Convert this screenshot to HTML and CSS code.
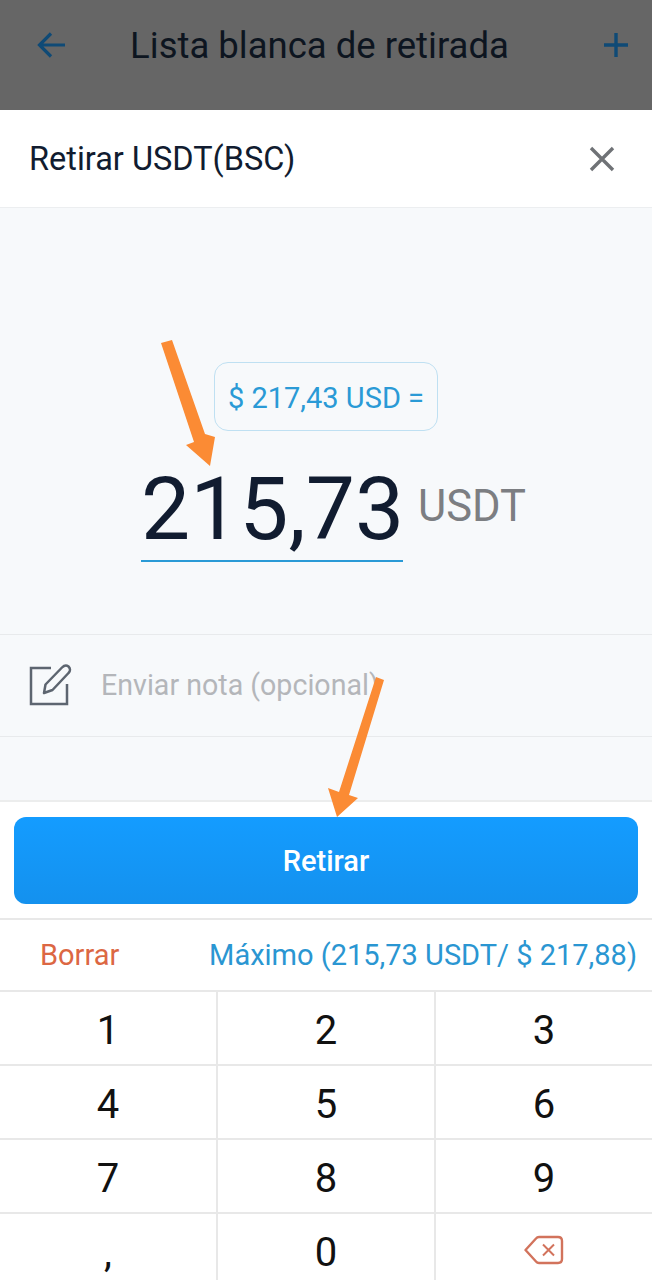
FILE: index.html
```html
<!DOCTYPE html>
<html lang="es">
<head>
    <meta charset="UTF-8">
    <meta name="viewport" content="width=device-width, initial-scale=1.0">
    <title>Retirar USDT</title>
    <link rel="stylesheet" href="styles.css">
</head>
<body>
    <div class="page">
        <header class="topbar">
            <svg class="topbar-icon" width="32" height="32" viewBox="0 0 32 32"><path d="M30 16H5M16 4.500L4.500 16 16 27.500" fill="none" stroke="#0f4a76" stroke-width="3.200"/></svg>
            <h1 class="topbar-title">Lista blanca de retirada</h1>
            <svg class="topbar-icon" width="28" height="28" viewBox="0 0 28 28"><path d="M14 2V26M2 14H26" fill="none" stroke="#0f4a76" stroke-width="3.400"/></svg>
        </header>
        <div class="sheet-head">
            <h2 class="sheet-title">Retirar USDT(BSC)</h2>
            <svg width="28" height="28" viewBox="0 0 28 28"><path d="M3 3L25 25M25 3L3 25" fill="none" stroke="#6f7276" stroke-width="3.400"/></svg>
        </div>
        <main class="sheet-body">
            <div class="rate">$ 217,43 USD =</div>
            <div class="amount-row">
                <span class="amount">215,73</span>
                <span class="unit">USDT</span>
            </div>
            <div class="note">
                <svg width="44" height="44" viewBox="0 -1 44 44"><path d="M22 4H2V40H38V20" fill="none" stroke="#5d6570" stroke-width="2.500"/><path d="M15 29L16.500 20.500 33 3.500C35 1.500 37.500 1 39.500 2.500 41.500 4.500 41.500 7 39.500 9L23.500 26Z" fill="none" stroke="#5d6570" stroke-width="2.500" stroke-linejoin="round"/></svg>
                <span class="note-text">Enviar nota (opcional)</span>
            </div>
        </main>
        <footer class="sheet-foot">
            <div class="submit-wrap">
                <button class="submit" type="button">Retirar</button>
            </div>
            <div class="actions">
                <span class="clear">Borrar</span>
                <span class="max">Máximo (215,73 USDT/ $ 217,88)</span>
            </div>
            <div class="keypad">
                <div class="key">1</div>
                <div class="key">2</div>
                <div class="key">3</div>
                <div class="key">4</div>
                <div class="key">5</div>
                <div class="key">6</div>
                <div class="key">7</div>
                <div class="key">8</div>
                <div class="key">9</div>
                <div class="key">,</div>
                <div class="key">0</div>
                <div class="key key-back">
                    <svg width="40" height="30" viewBox="0 0 40 30"><path d="M1.500 15L12 3.500C12.800 2.500 13.500 2 15 2H34C36.500 2 38 3.500 38 6V24C38 26.500 36.500 28 34 28H15C13.500 28 12.800 27.500 12 26.500Z" fill="none" stroke="#d2735c" stroke-width="2.400" stroke-linejoin="round"/><path d="M19 9.500L30 20.500M30 9.500L19 20.500" fill="none" stroke="#d2735c" stroke-width="2"/></svg>
                </div>
            </div>
        </footer>
        <!-- orange arrows drawn on top of the screenshot -->
        <svg class="arrows" width="652" height="1280" viewBox="0 0 652 1280">
            <path d="M161 343L172 340 205 434 215 437 210 466 186 445 194 442Z" fill="#fb8b34"/>
            <path d="M376 677L384 680 349 795 358 798 337 817 328 788 339 792Z" fill="#fb8b34"/>
        </svg>
    </div>
</body>
</html>
```
FILE: styles.css
```css
* {
    box-sizing: border-box;
}
body {
    margin: 0;
    font-family: Roboto, "Liberation Sans", sans-serif;
    color: #111c30;
}
.page {
    position: relative;
    width: 652px;
    height: 1280px;
    overflow: hidden;
    background: #fff;
    display: flex;
    flex-direction: column;
}
.topbar {
    height: 110px;
    flex: none;
    background: #666666;
    display: flex;
    align-items: center;
    justify-content: space-between;
    padding: 0 22px 20px 35px;
}
.topbar-title {
    margin: 0 30px 0 0;
    font-size: 36.500px;
    font-weight: 400;
    color: #0d1520;
}
.sheet-head {
    height: 98px;
    flex: none;
    display: flex;
    align-items: center;
    justify-content: space-between;
    padding: 0 36px 0 29px;
    border-bottom: 1px solid #eceef0;
}
.sheet-title {
    margin: 0;
    font-size: 32.500px;
    font-weight: 400;
    color: #111c30;
}
.sheet-body {
    height: 592px;
    flex: none;
    background: #f7f9fb;
    display: flex;
    flex-direction: column;
    align-items: center;
    padding-top: 154px;
}
.rate {
    width: 224px;
    height: 69px;
    padding-top: 2px;
    border: 1px solid #bfe0f2;
    border-radius: 14px;
    display: flex;
    align-items: center;
    justify-content: center;
    font-size: 29px;
    color: #2a9ad6;
}
.amount-row {
    width: 100%;
    height: 131px;
    display: flex;
    align-items: flex-start;
    padding-left: 141px;
}
.amount {
    width: 262px;
    height: 131px;
    border-bottom: 2px solid #2a9ad6;
    text-align: center;
    font-size: 87.500px;
    line-height: 156px;
    color: #111c30;
}
.unit {
    margin-left: 15px;
    font-size: 43.500px;
    line-height: 152px;
    color: #7c7e82;
}
.note {
    width: 100%;
    height: 103px;
    margin-top: 72px;
    padding-bottom: 1px;
    border-top: 1px solid #e8eaec;
    border-bottom: 1px solid #e8eaec;
    display: flex;
    align-items: center;
    gap: 28px;
    padding-left: 29px;
}
.note-text {
    font-size: 28.600px;
    color: #b4b6ba;
}
.sheet-foot {
    flex: 1;
    border-top: 2px solid #eceded;
    display: flex;
    flex-direction: column;
}
.submit-wrap {
    height: 118px;
    flex: none;
    padding: 15px 14px;
    border-bottom: 2px solid #e8e8e8;
}
.submit {
    display: block;
    width: 100%;
    height: 87px;
    border: none;
    border-radius: 12px;
    background: linear-gradient(#149cff, #1491ee);
    color: #fff;
    font-family: inherit;
    font-size: 29px;
    font-weight: 500;
}
.actions {
    height: 72px;
    flex: none;
    display: flex;
    align-items: center;
    justify-content: space-between;
    padding: 0 15px 0 40px;
    border-bottom: 2px solid #e8e8e8;
    font-size: 29px;
}
.clear {
    color: #dc6743;
}
.max {
    color: #2a96d2;
}
.keypad {
    flex: 1;
    display: grid;
    grid-template-columns: 218px 218px 216px;
    grid-auto-rows: 74px;
}
.key {
    display: flex;
    align-items: center;
    justify-content: center;
    padding-top: 4px;
    border-right: 2px solid #e8e8e8;
    border-bottom: 2px solid #e8e8e8;
    font-size: 40px;
    color: #111;
}
.key:nth-child(3n) {
    border-right: none;
}
.key-back {
    padding-top: 0;
}
.arrows {
    position: absolute;
    top: 0;
    left: 0;
}
```
